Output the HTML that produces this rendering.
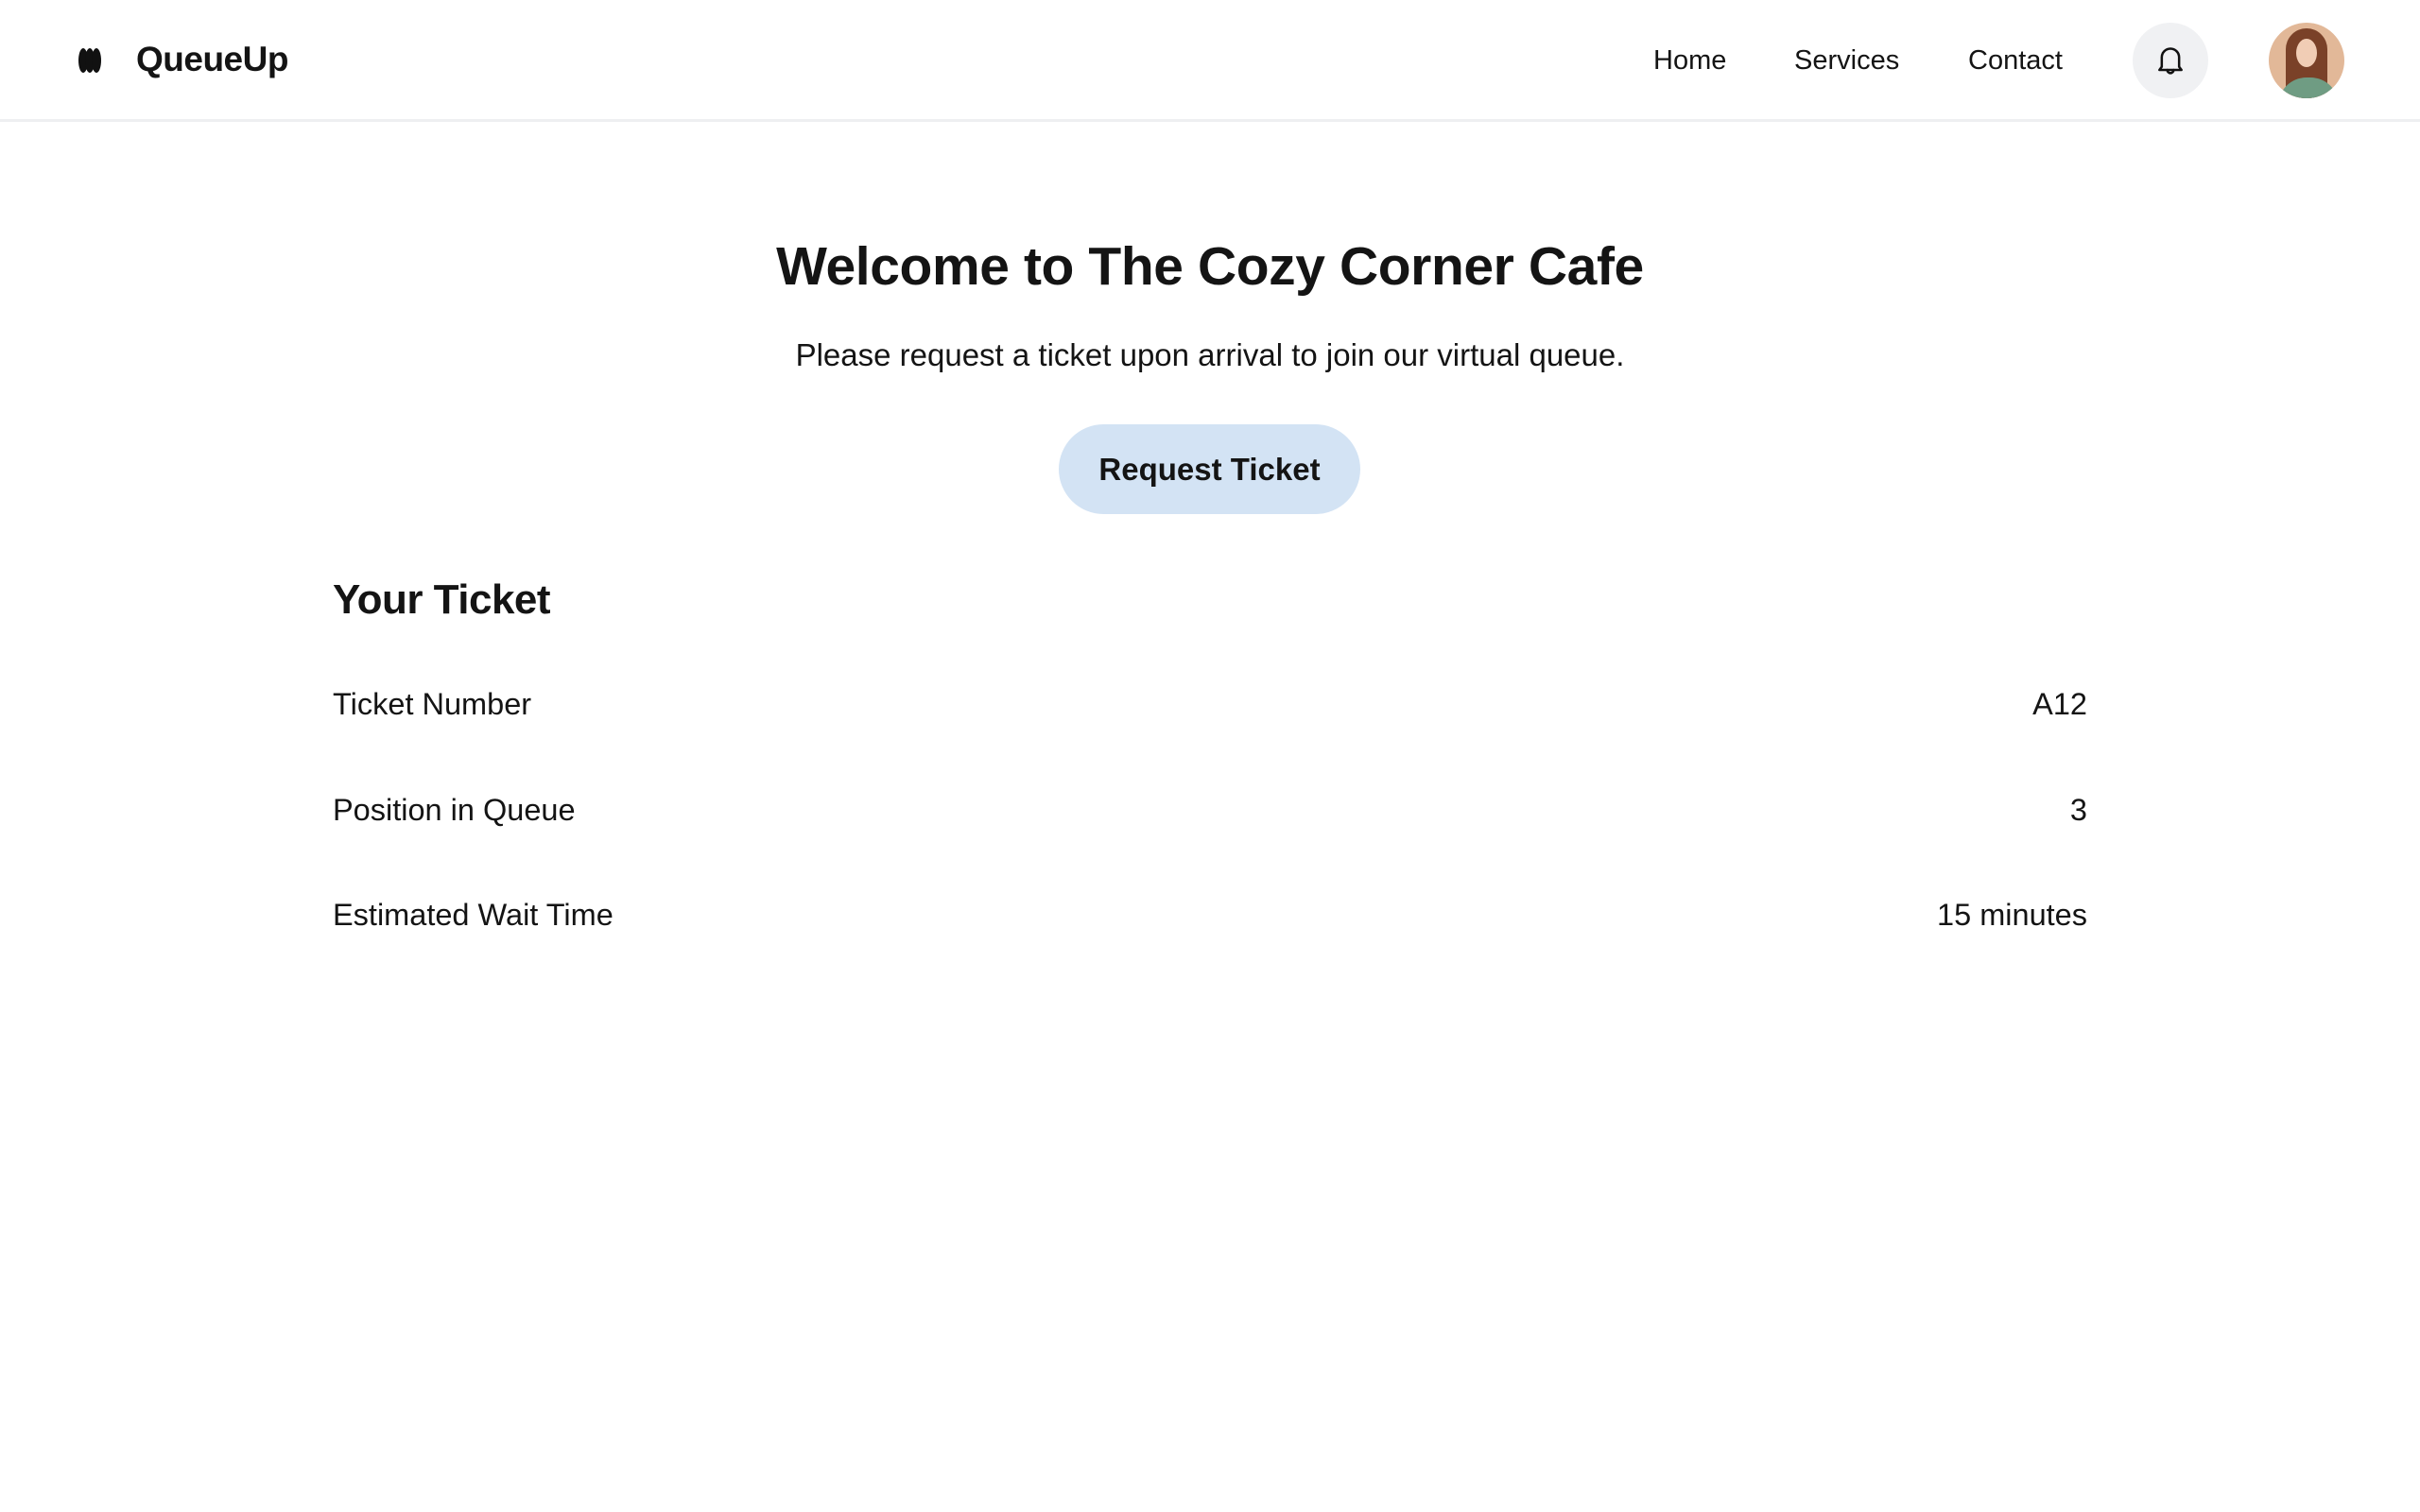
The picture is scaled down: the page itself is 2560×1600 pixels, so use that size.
<!DOCTYPE html>
<html><head><style>
*{margin:0;padding:0;box-sizing:border-box}
body{width:2560px;height:1600px;background:#fff;font-family:"Liberation Sans",sans-serif;color:#141414;position:relative;overflow:hidden}
.hdr{position:absolute;left:0;top:0;width:2560px;height:129px;border-bottom:3px solid #eeeff1}
.abs{position:absolute;white-space:nowrap}
.nav{font-size:29px;top:48px}
.row{font-size:32.5px;line-height:40px}
</style></head><body>
<div class="hdr">
<svg class="abs" style="left:82px;top:50px" width="26" height="28" viewBox="0 0 26 28"><ellipse cx="6" cy="14" rx="5" ry="13" fill="#111"/><ellipse cx="13" cy="14" rx="5" ry="13" fill="#111"/><ellipse cx="20" cy="14" rx="5" ry="13" fill="#111"/></svg>
<div class="abs" style="left:144px;top:42px;font-size:37px;font-weight:bold;letter-spacing:-0.5px">QueueUp</div>
<div class="abs nav" style="left:1749px">Home</div>
<div class="abs nav" style="left:1898px">Services</div>
<div class="abs nav" style="left:2082px">Contact</div>
<div class="abs" style="left:2256px;top:24px;width:80px;height:80px;border-radius:50%;background:#f0f1f3"></div>
<svg class="abs" style="left:2276px;top:44px" width="40" height="40" viewBox="0 0 24 24" fill="none" stroke="#111" stroke-width="1.5" stroke-linecap="round" stroke-linejoin="round"><path d="M6.5 16V10a5.5 5.5 0 0 1 11 0v6l1.5 2h-14z"/><path d="M10 18a2 2 0 0 0 4 0"/></svg>
<div class="abs" style="left:2400px;top:24px;width:80px;height:80px;border-radius:50%;background:#e2b898;overflow:hidden">
<div style="position:absolute;left:18px;top:6px;width:44px;height:80px;border-radius:22px 22px 0 0;background:#7a4128"></div>
<div style="position:absolute;left:29px;top:17px;width:22px;height:30px;border-radius:50%;background:#f1cdb5"></div>
<div style="position:absolute;left:10px;top:58px;width:64px;height:40px;border-radius:30px 30px 0 0;background:#6f9c83"></div>
</div>
</div>
<div class="abs" style="left:0;width:2560px;text-align:center;top:249px;font-size:57px;font-weight:bold;letter-spacing:-0.4px">Welcome to The Cozy Corner Cafe</div>
<div class="abs" style="left:0;width:2560px;text-align:center;top:357px;font-size:33px">Please request a ticket upon arrival to join our virtual queue.</div>
<div class="abs" style="left:1120px;top:449px;width:319px;height:95px;border-radius:48px;background:#d3e3f4;text-align:center;line-height:95px;font-size:33px;font-weight:bold">Request Ticket</div>
<div class="abs" style="left:352px;top:610px;font-size:44px;font-weight:bold;letter-spacing:-0.5px">Your Ticket</div>
<div class="abs row" style="left:352px;top:725px">Ticket Number</div>
<div class="abs row" style="right:352px;top:725px">A12</div>
<div class="abs row" style="left:352px;top:837px">Position in Queue</div>
<div class="abs row" style="right:352px;top:837px">3</div>
<div class="abs row" style="left:352px;top:948px">Estimated Wait Time</div>
<div class="abs row" style="right:352px;top:948px">15 minutes</div>
</body></html>
